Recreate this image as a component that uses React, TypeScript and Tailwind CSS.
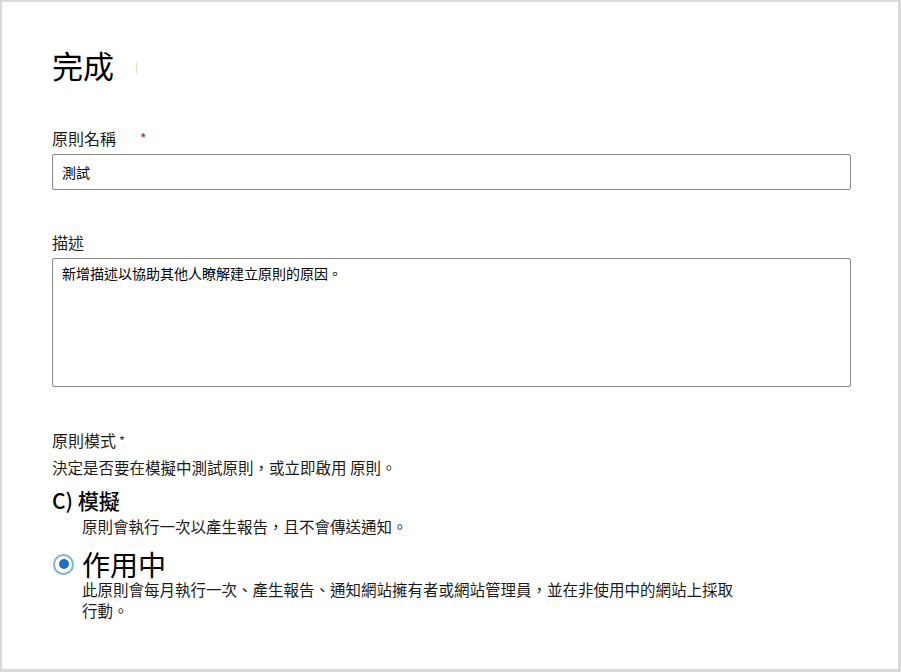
const FONT = { fontFamily: '"Noto Sans CJK TC", "Noto Sans", sans-serif' };

function Label({ children, required }: { children: React.ReactNode; required?: 'red' | 'plain' }) {
  return (
    <div className="flex items-center text-[16px] leading-[20px] text-[#1b1b1b]">
      <span>{children}</span>
      {required === 'red' && <span className="ml-[24px] text-[14px] leading-none text-[#a4262c]">*</span>}
      {required === 'plain' && <span className="ml-[3px] text-[13px] leading-none text-[#333]">*</span>}
    </div>
  );
}

export default function App() {
  return (
    <div
      className="box-border h-[672px] w-[901px] border-t-2 border-l-2 border-r-[3px] border-b-[3px] border-[#d9d9d9] bg-white pl-[50px] pt-[44px] text-[#1b1b1b]"
      style={FONT}
    >
      <div className="flex items-center text-[31px] leading-[38px] text-black">
        完成
        <span className="ml-[22px] mt-[6px] h-[12px] w-px bg-[#f3d9b8]" />
      </div>

      <div className="mt-[44px]">
        <Label required="red">原則名稱</Label>
      </div>
      <input
        readOnly
        defaultValue="測試"
        className="mt-[6px] block h-[36px] w-[799px] rounded-[2px] border border-[#8a8a8a] px-[9px] text-[14px] text-black outline-none"
      />

      <div className="mt-[42px]">
        <Label>描述</Label>
      </div>
      <textarea
        readOnly
        defaultValue="新增描述以協助其他人瞭解建立原則的原因。"
        className="mt-[6px] block h-[129px] w-[799px] resize-none rounded-[2px] border border-[#8a8a8a] px-[9px] pt-[4px] text-[14px] leading-[20px] text-black outline-none"
      />

      <div className="mt-[43px]">
        <Label required="plain">原則模式</Label>
      </div>
      <div className="mt-[7px] text-[15.5px] leading-[20px]">決定是否要在模擬中測試原則，或立即啟用 原則。</div>

      <div className="mt-[8px] text-[21px] font-medium leading-[30px] text-black">C) 模擬</div>
      <div className="mt-[1px] pl-[30px] text-[15.5px] leading-[20px]">原則會執行一次以產生報告，且不會傳送通知。</div>

      <div className="mt-[14px] flex items-center">
        <span className="ml-[1px] flex h-[21px] w-[21px] items-center justify-center rounded-full border-2 border-[#7cb0e6]">
          <span className="h-[10px] w-[10px] rounded-full bg-[#1d6fc4]" />
        </span>
        <span className="ml-[8px] text-[28px] leading-[28px] text-black">作用中</span>
      </div>
      <div className="mt-[1px] pl-[30px] text-[15.5px] leading-[21px]">
        此原則會每月執行一次、產生報告、通知網站擁有者或網站管理員，並在非使用中的網站上採取
        <br />
        行動。
      </div>
    </div>
  );
}
